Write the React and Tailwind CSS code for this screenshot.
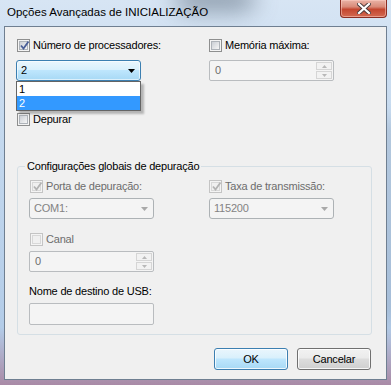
import React from 'react'

// Windows 7 style "advanced boot options" dialog

function Check({ checked, disabled }) {
  return (
    <span
      className={`relative flex h-[13px] w-[13px] shrink-0 items-center justify-center border bg-[#f4f4f4] ${
        disabled ? 'border-[#c4c4c4]' : 'border-[#8e8f8f]'
      }`}
    >
      <span
        className={`h-[9px] w-[9px] border ${
          disabled
            ? 'border-[#d8d8d8] bg-[#f0f0f0]'
            : 'border-[#aeb3b9] bg-gradient-to-br from-[#cbcfd5] to-[#f6f6f6]'
        }`}
      />
      {checked && (
        <svg className="absolute left-[1px] top-[0px]" width="11" height="11" viewBox="0 0 11 11">
          <polyline
            points="2,5.5 4.5,8.5 9.5,1.5"
            fill="none"
            stroke={disabled ? '#b3b3b3' : '#4a5f97'}
            strokeWidth="1.8"
          />
        </svg>
      )}
    </span>
  )
}

function CheckRow({ label, checked, disabled }) {
  return (
    <div className="flex h-[13px] items-center gap-[3px]">
      <Check checked={checked} disabled={disabled} />
      <span className={`whitespace-nowrap leading-[15px] ${disabled ? 'text-[#6d6d6d]' : 'text-black'}`}>{label}</span>
    </div>
  )
}

function Combo({ value, hot }) {
  return (
    <div
      className={`flex h-[21px] w-[125px] items-center justify-between rounded-[3px] border pl-[4px] pr-[5px] ${
        hot
          ? 'border-[#3c7fb1] bg-[linear-gradient(to_bottom,#eaf6fd_0%,#d9f0fc_45%,#bee6fd_50%,#a7d9f5_100%)] text-black shadow-[inset_0_0_0_1px_rgba(255,255,255,0.6)]'
          : 'border-[#adb2b5] bg-[#f4f4f4] text-[#838383]'
      }`}
    >
      <span className="leading-[15px]">{value}</span>
      <svg width="7" height="4" viewBox="0 0 7 4">
        <polygon points="0,0 7,0 3.5,4" fill={hot ? '#000' : '#a9a9a9'} />
      </svg>
    </div>
  )
}

function Spin({ value }) {
  return (
    <div className="flex h-[21px] w-[125px] items-stretch rounded-[2px] border border-[#b9bcbf] bg-[#f4f4f4]">
      <span className="flex-1 pl-[5px] leading-[19px] text-[#6d6d6d]">{value}</span>
      <div className="flex w-[17px] flex-col gap-[1px] py-[1px] pr-[1px]">
        <div className="flex flex-1 items-center justify-center border border-[#d5d5d5] bg-[#f2f2f2]">
          <svg width="5" height="3" viewBox="0 0 5 3">
            <polygon points="0,3 5,3 2.5,0" fill="#b8b8b8" />
          </svg>
        </div>
        <div className="flex flex-1 items-center justify-center border border-[#d5d5d5] bg-[#f2f2f2]">
          <svg width="5" height="3" viewBox="0 0 5 3">
            <polygon points="0,0 5,0 2.5,3" fill="#b8b8b8" />
          </svg>
        </div>
      </div>
    </div>
  )
}

export default function App() {
  return (
    <div className="relative h-[385px] w-[391px] overflow-hidden bg-[linear-gradient(to_bottom,#d7e5f4_0%,#c6daef_30%,#b3cce8_85%,#a98aa6_100%)] font-['Liberation_Sans',Arial,sans-serif] text-[11px] tracking-[-0.2px] text-black">
      {/* blurred glass behind the title bar */}
      <div className="pointer-events-none absolute left-[175px] top-[-12px] h-[22px] w-[80px] rounded-full bg-[#5f6f80] opacity-70 blur-md" />
      <div className="pointer-events-none absolute right-[-4px] top-[120px] h-[200px] w-[8px] bg-[#6c8199] opacity-50 blur-sm" />

      {/* title bar */}
      <div className="relative flex h-[26px] items-start">
        <span className="ml-[7px] mt-[5px] text-[11.5px] leading-[15px] tracking-normal text-black">Opções Avançadas de INICIALIZAÇÃO</span>
        <button className="absolute right-[4px] top-0 flex h-[18px] w-[47px] items-center justify-center rounded-b-[4px] border border-t-0 border-[#8a2d22] bg-[linear-gradient(to_bottom,#eab3a6_0%,#d98a78_40%,#c4462f_55%,#d36a52_100%)] shadow-[inset_0_0_0_1px_rgba(255,210,200,0.5)]">
          <svg width="14" height="11" viewBox="0 0 14 11">
            <path d="M2 1 L12 10 M12 1 L2 10" stroke="#4a3a3a" strokeWidth="4" strokeLinecap="square" />
            <path d="M2 1 L12 10 M12 1 L2 10" stroke="#ffffff" strokeWidth="2.2" strokeLinecap="square" />
          </svg>
        </button>
      </div>

      {/* client area */}
      <div className="relative ml-[4px] h-[354px] w-[383px] border border-[#6f7f91] bg-[#f0f0f0] pl-[11px] pt-[12px]">
        <div className="grid grid-cols-[193px_125px]">
          <div className="ml-[1px]">
            <CheckRow label="Número de processadores:" checked />
          </div>
          <CheckRow label="Memória máxima:" />

          <div className="relative mt-[8px]">
            <Combo value="2" hot />
            <div className="absolute left-0 top-[21px] z-10 w-[125px] border border-[#646464] bg-white shadow-[3px_3px_2px_rgba(0,0,0,0.25)]">
              <div className="h-[14px] pl-[2px] leading-[14px]">1</div>
              <div className="h-[14px] bg-[#3399ff] pl-[2px] leading-[14px] text-white">2</div>
            </div>
          </div>
          <div className="mt-[8px]">
            <Spin value="0" />
          </div>

          <div className="col-span-2 ml-[1px] mt-[32px]">
            <CheckRow label="Depurar" />
          </div>
        </div>

        <fieldset className="ml-[1px] mt-[33px] h-[176px] w-[355px] rounded-[3px] border border-[#d5dfe5] pl-[11px]">
          <legend className="ml-[-4px] px-[2px] leading-[14px] text-black">Configurações globais de depuração</legend>
          <div className="grid grid-cols-[180px_125px] pt-[7px]">
            <div className="ml-[1px]">
              <CheckRow label="Porta de depuração:" checked disabled />
            </div>
            <CheckRow label="Taxa de transmissão:" checked disabled />
            <div className="mt-[5px]">
              <Combo value="COM1:" />
            </div>
            <div className="mt-[5px]">
              <Combo value="115200" />
            </div>
          </div>
          <div className="ml-[1px] mt-[14px]">
            <CheckRow label="Canal" disabled />
          </div>
          <div className="mt-[5px]">
            <Spin value="0" />
          </div>
          <div className="mt-[12px] leading-[15px]">Nome de destino de USB:</div>
          <div className="mt-[4px] h-[22px] w-[125px] rounded-[2px] border border-[#b9bcbf] bg-[#f4f4f4]" />
        </fieldset>

        <div className="mt-[13px] flex justify-end gap-[9px] pr-[15px]">
          <button className="h-[22px] w-[74px] rounded-[3px] border border-[#3c7fb1] bg-[linear-gradient(to_bottom,#eaf6fd_0%,#d9f0fc_45%,#bee6fd_50%,#a7d9f5_100%)] leading-[20px] text-black shadow-[inset_0_0_0_1px_rgba(255,255,255,0.8)]">
            OK
          </button>
          <button className="h-[22px] w-[74px] rounded-[3px] border border-[#707070] bg-[linear-gradient(to_bottom,#f2f2f2_0%,#ebebeb_45%,#dddddd_50%,#cfcfcf_100%)] leading-[20px] text-black shadow-[inset_0_0_0_1px_rgba(255,255,255,0.8)]">
            Cancelar
          </button>
        </div>
      </div>
    </div>
  )
}
